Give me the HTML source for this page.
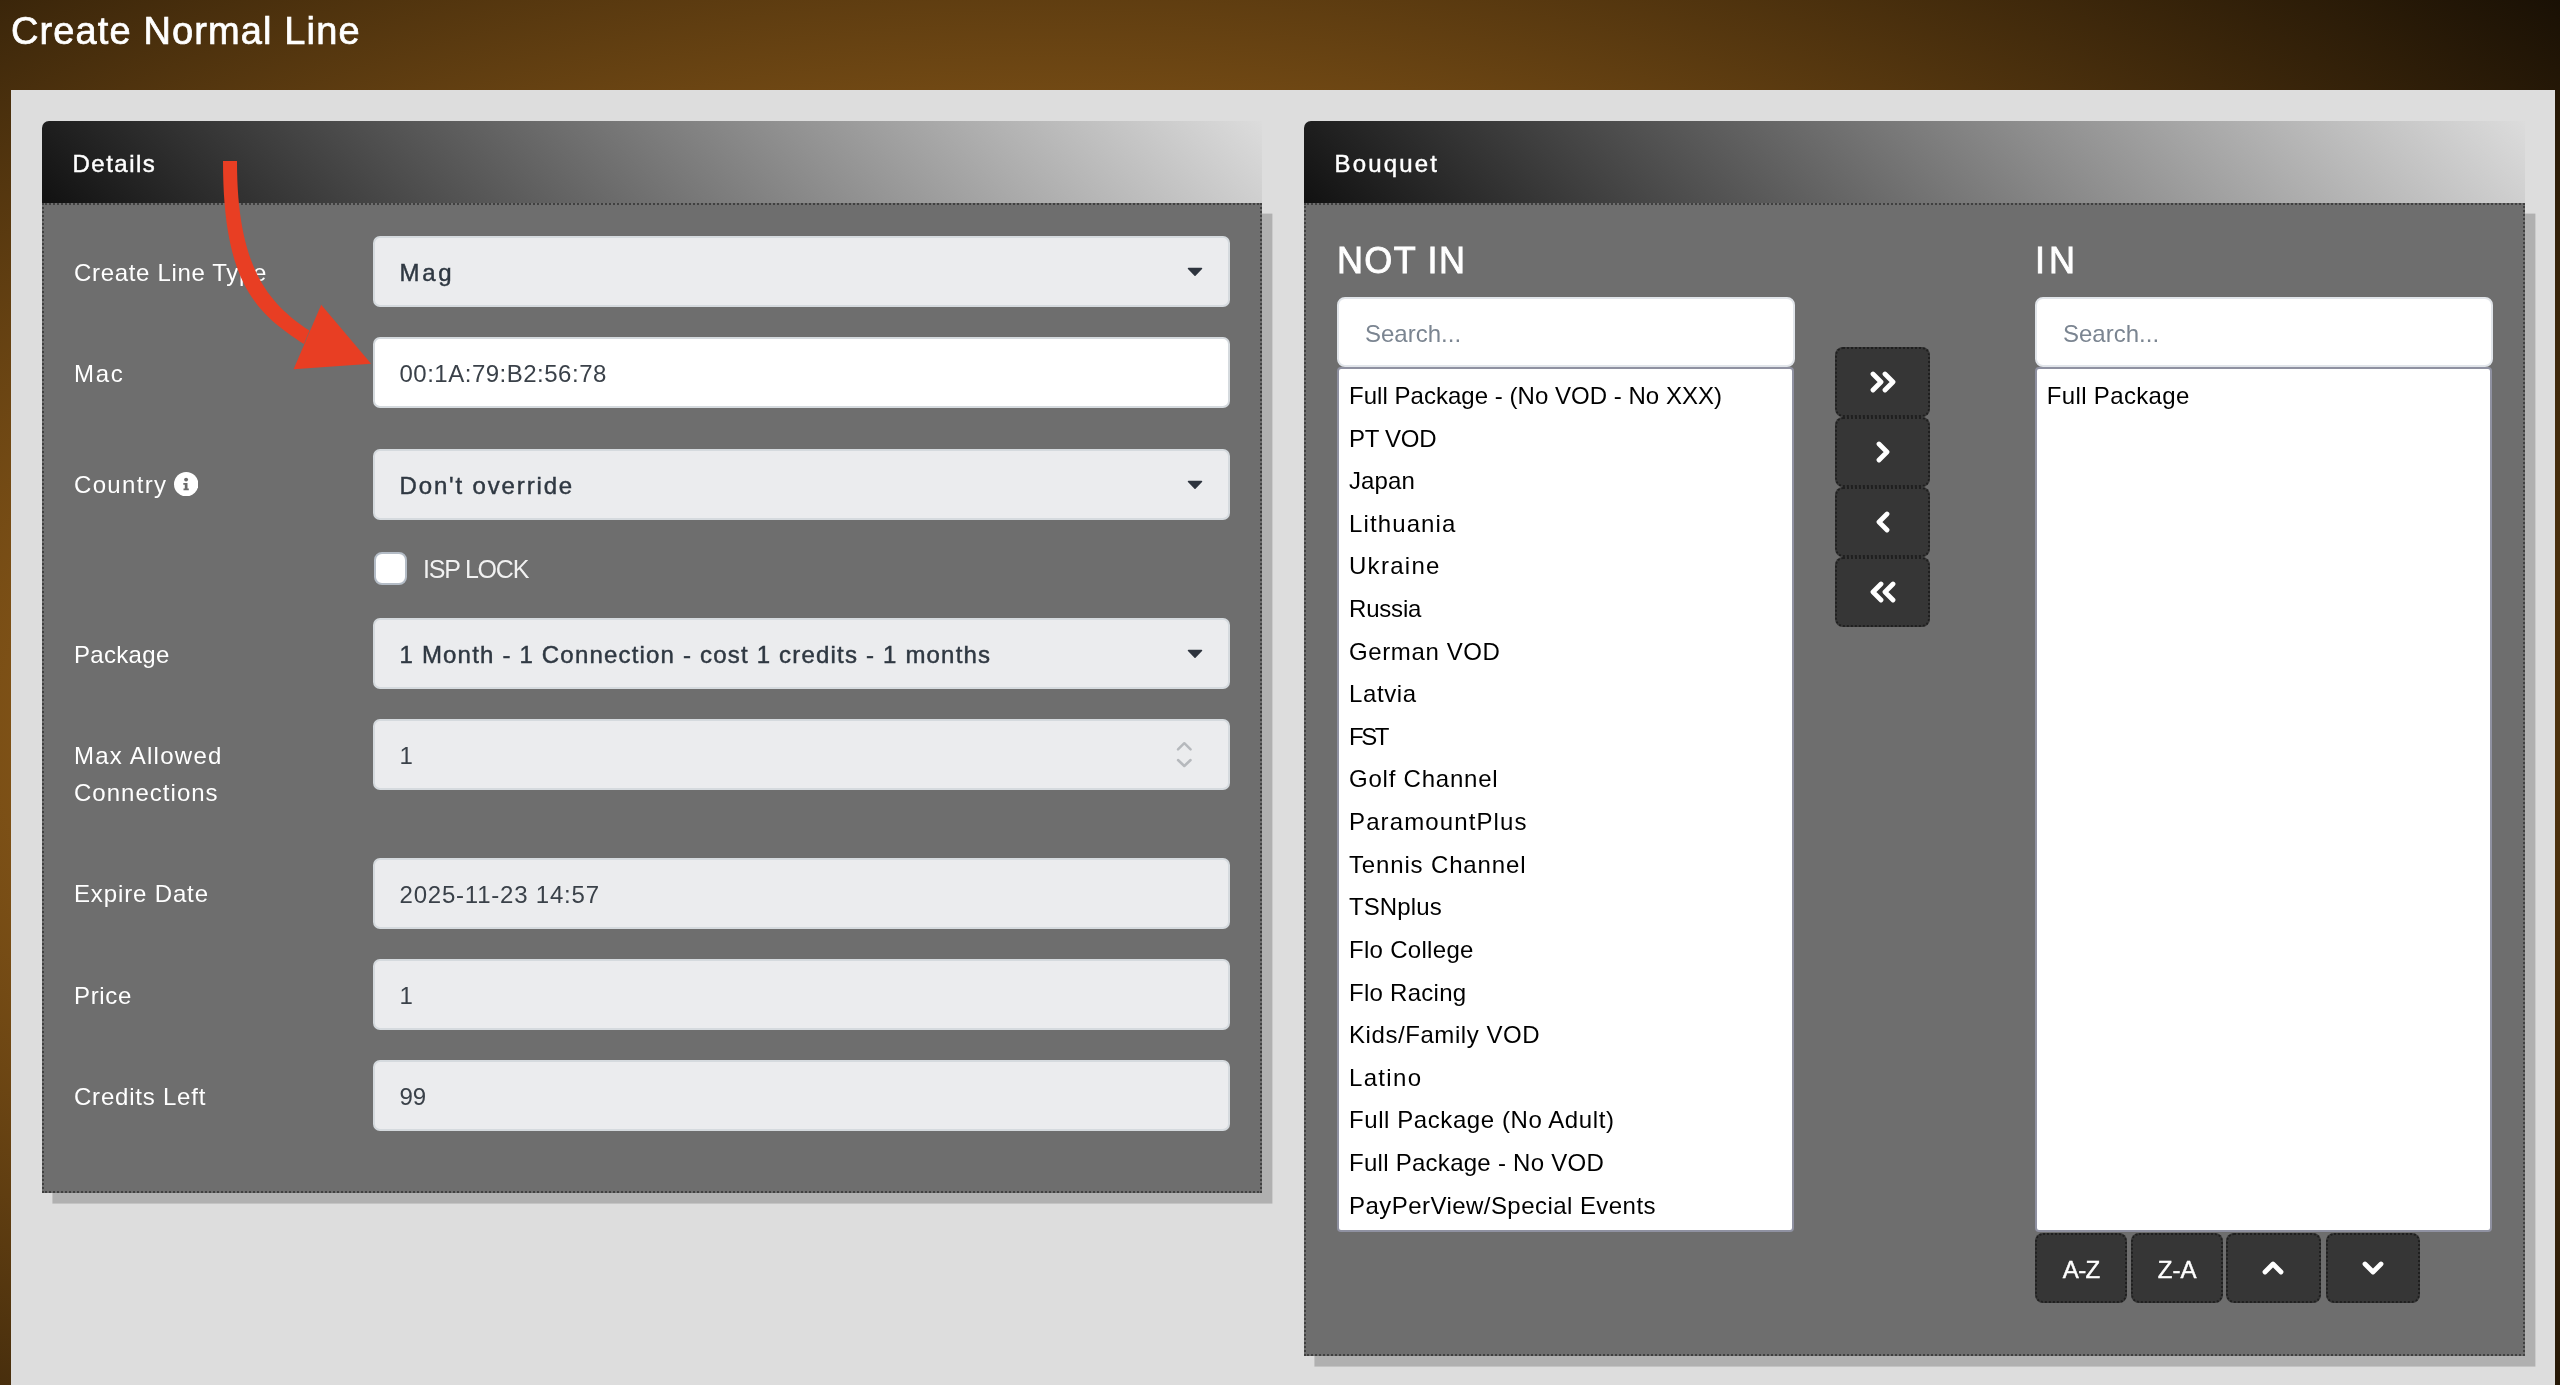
<!DOCTYPE html>
<html lang="en">
<head>
<meta charset="utf-8">
<title>Create Normal Line</title>
<style>
*{box-sizing:border-box;margin:0;padding:0}
html,body{width:2560px;height:1385px;overflow:hidden}
body{position:relative;font-family:"Liberation Sans",sans-serif;font-size:24px;color:#fff;
  background:#000 radial-gradient(ellipse 2252px 1262px at 1050px 740px,#e99629 0%,#000 100%);}
.abs{position:absolute;will-change:transform}
.nw{white-space:nowrap}
#title{left:10.5px;top:10px;font-size:38px;line-height:42px;white-space:nowrap;color:#fff;-webkit-text-stroke:.7px #fff}
#main{left:11px;top:90px;width:2544px;height:1295px;background:#ddd}
.card-h{height:83px;border-radius:7px 0 0 0;background:linear-gradient(45deg,#111 0%,#dcdcdc 100%)}
.card-h span{position:absolute;left:30.5px;top:28px;font-size:24px;line-height:30px;white-space:nowrap;-webkit-text-stroke:.45px #fff}
.card-b{background:#6e6e6e;border:2px dotted #404040;box-shadow:10.4px 10.6px 0 rgba(0,0,0,.2)}
.lbl{font-size:24px;line-height:30px;white-space:nowrap;color:#fff}
.fld{left:373px;width:857px;height:71px;border:2px solid #d5dade;border-radius:7px;background:#ebecee;color:#3a4149;font-size:24px;line-height:69px;padding-left:24.5px;white-space:nowrap}
.fld.sel{color:#2f3842;-webkit-text-stroke:.45px #2f3842}
.fld.w{background:#fff}
.caret{position:absolute;right:24.9px;top:29.2px}
.h2{font-size:36px;line-height:44px;white-space:nowrap;-webkit-text-stroke:.85px #fff}
.srch{width:457.5px;height:70px;border:2px solid #e1e5ea;border-radius:8px;background:#fff;color:#7b8591;font-size:24px;line-height:70px;padding-left:26px}
.list{width:457.4px;height:865px;background:#fff;border:2px solid #8f91a1;border-radius:4px;color:#000;font-size:24px;padding-top:6px}
.list div{height:42.62px;line-height:42.62px;padding-left:10px;white-space:nowrap}
.btn{background:#363636;border:2px dotted #1f1f1f;border-radius:8px;color:#fff;text-align:center;font-size:24px}
.btn svg{position:absolute;left:50%;top:50%;transform:translate(-50%,-50%)}
.btn.t{-webkit-text-stroke:.45px #fff;line-height:70px}
</style>
</head>
<body>
<div id="title" class="abs" style="letter-spacing:1.12px">Create Normal Line</div>
<div id="main" class="abs"></div>

<!-- Details card -->
<div class="abs card-h" style="left:42px;top:121px;width:1220.1px"><span style="letter-spacing:1.49px">Details</span></div>
<div class="abs card-b" style="left:42px;top:203.3px;width:1220.1px;height:990.3px"></div>
<div class="abs lbl" style="left:74.3px;top:258px;letter-spacing:0.67px;">Create Line Type</div>
<div class="abs fld sel" style="top:236px;letter-spacing:2.70px">Mag<svg class="caret" width="16" height="10" viewBox="0 0 16 10"><path d="M1.5 1.5h13L8 8.2z" fill="#2e343e" stroke="#2e343e" stroke-width="1.5" stroke-linejoin="round"/></svg></div>
<div class="abs lbl" style="left:74.3px;top:359px;letter-spacing:1.70px;">Mac</div>
<div class="abs fld w" style="top:337px;letter-spacing:0.50px">00:1A:79:B2:56:78</div>
<div class="abs lbl" style="left:74.3px;top:470px;letter-spacing:1.32px;">Country</div>
<svg class="abs" style="left:173.7px;top:471.9px" width="24.4" height="24.4" viewBox="0 0 24.4 24.4"><circle cx="12.2" cy="12.2" r="12.2" fill="#fff"/><circle cx="12.1" cy="7.6" r="1.95" fill="#6a6a6a"/><path d="M9.3 10.9H13.5V16.6H14.8V18.3H9.5V16.6H10.8V12.7H9.3Z" fill="#6a6a6a"/></svg>
<div class="abs fld sel" style="top:449px;letter-spacing:1.85px">Don't override<svg class="caret" width="16" height="10" viewBox="0 0 16 10"><path d="M1.5 1.5h13L8 8.2z" fill="#2e343e" stroke="#2e343e" stroke-width="1.5" stroke-linejoin="round"/></svg></div>
<div class="abs" style="left:374px;top:552px;width:33px;height:33px;background:#fff;border:2px solid #b4bcc6;border-radius:8px"></div>
<div class="abs lbl" style="left:422.5px;top:554.3px;letter-spacing:-1.22px;font-size:25px;color:rgba(255,255,255,.9)">ISP LOCK</div>
<div class="abs lbl" style="left:74.3px;top:640px;letter-spacing:0.31px;">Package</div>
<div class="abs fld sel" style="top:618px;letter-spacing:1.19px">1 Month - 1 Connection - cost 1 credits - 1 months<svg class="caret" width="16" height="10" viewBox="0 0 16 10"><path d="M1.5 1.5h13L8 8.2z" fill="#2e343e" stroke="#2e343e" stroke-width="1.5" stroke-linejoin="round"/></svg></div>
<div class="abs lbl" style="left:74.3px;top:741px;letter-spacing:1.26px;">Max Allowed</div>
<div class="abs lbl" style="left:74.3px;top:778px;letter-spacing:1.02px;">Connections</div>
<div class="abs fld" style="top:719px">1</div>
<svg class="abs" style="left:1174px;top:738px" width="22" height="32" viewBox="0 0 22 32" fill="none" stroke="#b6b9bd" stroke-width="2.5" stroke-linecap="round" stroke-linejoin="round"><path d="M4 11.3L10.3 5.2L16.6 11.3M4 22L10.3 28L16.6 22"/></svg>
<div class="abs lbl" style="left:74.3px;top:879px;letter-spacing:0.86px;">Expire Date</div>
<div class="abs fld" style="top:858px;letter-spacing:0.79px">2025-11-23 14:57</div>
<div class="abs lbl" style="left:74.3px;top:981px;letter-spacing:0.65px;">Price</div>
<div class="abs fld" style="top:959px">1</div>
<div class="abs lbl" style="left:74.3px;top:1082px;letter-spacing:0.78px;">Credits Left</div>
<div class="abs fld" style="top:1060px">99</div>

<!-- Bouquet card -->
<div class="abs card-h" style="left:1304px;top:121px;width:1220.7px"><span style="letter-spacing:2.16px">Bouquet</span></div>
<div class="abs card-b" style="left:1304px;top:203.3px;width:1220.7px;height:1152.6px"></div>
<div class="abs h2" style="left:1337px;top:239px;letter-spacing:1.32px">NOT IN</div>
<div class="abs srch" style="left:1336.6px;top:297px">Search...</div>
<div class="abs list" style="left:1336.7px;top:367px">
<div style="letter-spacing:0.03px">Full Package - (No VOD - No XXX)</div>
<div style="letter-spacing:-0.28px">PT VOD</div>
<div style="letter-spacing:0.12px">Japan</div>
<div style="letter-spacing:1.12px">Lithuania</div>
<div style="letter-spacing:1.29px">Ukraine</div>
<div style="letter-spacing:-0.20px">Russia</div>
<div style="letter-spacing:0.62px">German VOD</div>
<div style="letter-spacing:0.60px">Latvia</div>
<div style="letter-spacing:-2.40px">FST</div>
<div style="letter-spacing:0.78px">Golf Channel</div>
<div style="letter-spacing:1.12px">ParamountPlus</div>
<div style="letter-spacing:0.85px">Tennis Channel</div>
<div style="letter-spacing:0.10px">TSNplus</div>
<div style="letter-spacing:0.30px">Flo College</div>
<div style="letter-spacing:0.27px">Flo Racing</div>
<div style="letter-spacing:0.57px">Kids/Family VOD</div>
<div style="letter-spacing:1.32px">Latino</div>
<div style="letter-spacing:0.58px">Full Package (No Adult)</div>
<div style="letter-spacing:0.27px">Full Package - No VOD</div>
<div style="letter-spacing:0.45px">PayPerView/Special Events</div>
</div>
<div class="abs btn" style="left:1834.75px;top:347.4px;width:95px;height:69.8px"><svg width="28" height="22" viewBox="0 0 28 22" fill="none" stroke="#fff" stroke-width="4.8" stroke-linecap="round" stroke-linejoin="round"><path d="M4 3l8 8-8 8M16 3l8 8-8 8"/></svg></div>
<div class="abs btn" style="left:1834.75px;top:417.2px;width:95px;height:69.8px"><svg width="16" height="22" viewBox="0 0 16 22" fill="none" stroke="#fff" stroke-width="4.8" stroke-linecap="round" stroke-linejoin="round"><path d="M4 3l8 8-8 8"/></svg></div>
<div class="abs btn" style="left:1834.75px;top:487px;width:95px;height:69.8px"><svg width="16" height="22" viewBox="0 0 16 22" fill="none" stroke="#fff" stroke-width="4.8" stroke-linecap="round" stroke-linejoin="round"><path d="M12 3l-8 8 8 8"/></svg></div>
<div class="abs btn" style="left:1834.75px;top:556.8px;width:95px;height:69.8px"><svg width="28" height="22" viewBox="0 0 28 22" fill="none" stroke="#fff" stroke-width="4.8" stroke-linecap="round" stroke-linejoin="round"><path d="M12 3l-8 8 8 8M24 3l-8 8 8 8"/></svg></div>
<div class="abs h2" style="left:2034.5px;top:239px;letter-spacing:4px">IN</div>
<div class="abs srch" style="left:2034.7px;top:297px">Search...</div>
<div class="abs list" style="left:2034.75px;top:367px">
<div style="padding-left:9.75px;letter-spacing:0.35px">Full Package</div>
</div>
<div class="abs btn t" style="left:2034.75px;top:1233px;width:92.25px;height:70.2px;letter-spacing:-0.70px">A-Z</div>
<div class="abs btn t" style="left:2130.6px;top:1233px;width:92.2px;height:70.2px;letter-spacing:0.00px">Z-A</div>
<div class="abs btn" style="left:2226.3px;top:1233px;width:94.7px;height:70.2px"><svg width="22" height="16" viewBox="0 0 22 16" fill="none" stroke="#fff" stroke-width="4.8" stroke-linecap="round" stroke-linejoin="round"><path d="M3 12l8-8 8 8"/></svg></div>
<div class="abs btn" style="left:2325.7px;top:1233px;width:94.2px;height:70.2px"><svg width="22" height="16" viewBox="0 0 22 16" fill="none" stroke="#fff" stroke-width="4.8" stroke-linecap="round" stroke-linejoin="round"><path d="M3 4l8 8 8-8"/></svg></div>

<!-- annotation arrow -->
<svg class="abs" style="left:200px;top:150px" width="200" height="240" viewBox="200 150 200 240">
<path d="M223 161C223 286 258 313.5 303.9 344.1L309.5 330.6C267.4 302.8 237 266 237 161Z" fill="#e83e23"/>
<path d="M371.1 363.7L321.2 304.8L293.6 369.3Z" fill="#e83e23"/>
</svg>
</body>
</html>
